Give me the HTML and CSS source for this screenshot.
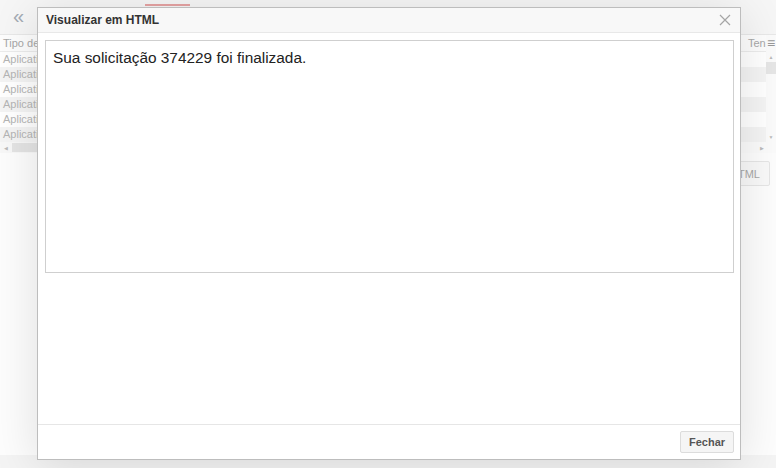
FILE: index.html
```html
<html lang="pt-BR">
<head>
    <meta charset="UTF-8">
    <title> Visualizar em HTML </title>
    <link rel="stylesheet" href="styles.css">
</head>
<body>
    <div class="page">
        <div class="toolbar">
            <span class="voltar">&laquo;</span>
            <span class="aba"></span>
        </div>
        <div class="grid">
            <div class="col_left">
                <div class="cab">Tipo de</div>
                <div class="linha">Aplicativo</div>
                <div class="linha par">Aplicativo</div>
                <div class="linha">Aplicativo</div>
                <div class="linha par">Aplicativo</div>
                <div class="linha">Aplicativo</div>
                <div class="linha par">Aplicativo</div>
                <div class="hscroll"><span class="seta">&#9664;</span><span class="thumb"></span></div>
            </div>
            <div class="col_right">
                <div class="cab">Ten<span class="menu">&#8801;</span></div>
                <div class="rows_scroll">
                    <div class="rows">
                        <div class="linha"></div>
                        <div class="linha par"></div>
                        <div class="linha"></div>
                        <div class="linha par"></div>
                        <div class="linha"></div>
                        <div class="linha par"></div>
                    </div>
                    <div class="vscroll">
                        <span class="seta">&#9650;</span>
                        <span class="vthumb"></span>
                        <span class="seta baixo">&#9660;</span>
                    </div>
                </div>
                <div class="hscroll dir"><span class="seta">&#9654;</span></div>
            </div>
        </div>
        <div class="acoes">
            <button class="btn_html">HTML</button>
        </div>
    </div>

    <div class="modal">
        <div class="modal_head">
            <strong>Visualizar em HTML</strong>
            <svg class="fechar_x" width="12" height="12" viewBox="0 0 12 12">
                <path d="M1 1 L11 11 M11 1 L1 11" stroke="#a5a5a5" stroke-width="1.2" fill="none"/>
            </svg>
        </div>
        <div class="modal_body">
            <div class="conteudo">Sua solicitação 374229 foi finalizada.</div>
        </div>
        <div class="modal_foot">
            <button class="btn_fechar">Fechar</button>
        </div>
    </div>
</body>
</html>
```

FILE: styles.css
```css
body {
    margin: 0;
    width: 776px;
    height: 468px;
    overflow: hidden;
    position: relative;
    font-family: "Liberation Sans", Arial, sans-serif;
    background: #f4f4f4;
}
.page {
    height: 455px;
    background: #fdfdfd;
}
.toolbar {
    height: 35px;
    background: #f6f6f6;
    border-bottom: 1px solid #e8e8e8;
    position: relative;
    box-sizing: border-box;
}
.voltar {
    position: absolute;
    left: 13px;
    top: 5px;
    font-size: 20px;
    color: #a3abb4;
}
.aba {
    position: absolute;
    left: 145px;
    top: 4px;
    width: 45px;
    height: 2px;
    background: #e5a3a3;
}
.grid {
    display: flex;
    justify-content: space-between;
    height: 116px;
    border-bottom: 1px solid #ececec;
    font-size: 11px;
    color: #b5b5b5;
}
.col_left {
    width: 80px;
    white-space: nowrap;
}
.col_right {
    width: 36px;
    white-space: nowrap;
}
.cab {
    height: 17px;
    line-height: 17px;
    padding-left: 3px;
    color: #a8a8a8;
    border-bottom: 1px solid #ececec;
    box-sizing: border-box;
    position: relative;
}
.col_right .cab {
    padding-left: 8px;
}
.menu {
    position: absolute;
    right: 0;
    top: 0;
    font-size: 14px;
    color: #999;
    background: #fbfbfb;
    width: 10px;
    text-align: center;
}
.linha {
    height: 15px;
    line-height: 15px;
    padding-left: 3px;
    background: #fff;
}
.linha.par {
    background: #f4f4f4;
}
.rows_scroll {
    display: flex;
}
.rows {
    flex: 1;
}
.vscroll {
    width: 10px;
    height: 90px;
    background: #fbfbfb;
    display: flex;
    flex-direction: column;
    align-items: center;
    font-size: 5px;
    color: #bbb;
}
.vscroll .seta {
    height: 10px;
    line-height: 10px;
}
.vthumb {
    width: 10px;
    height: 12px;
    background: #e6e6e6;
}
.vscroll .baixo {
    margin-top: auto;
}
.hscroll {
    height: 11px;
    background: #f8f8f8;
    display: flex;
    align-items: center;
    font-size: 5px;
    color: #bbb;
}
.hscroll .seta {
    width: 12px;
    text-align: center;
}
.thumb {
    flex: 1;
    height: 9px;
    background: #e4e4e4;
}
.hscroll.dir {
    justify-content: flex-end;
    padding-right: 8px;
    background: #fbfbfb;
}
.acoes {
    display: flex;
    justify-content: flex-end;
    padding: 9px 6px;
}
.btn_html {
    font-family: "Liberation Sans", Arial, sans-serif;
    font-size: 11px;
    color: #a8a8a8;
    background: #f9f9f9;
    border: 1px solid #e6e6e6;
    border-radius: 2px;
    height: 25px;
    padding: 0 9px;
}
.modal {
    position: absolute;
    left: 37px;
    top: 7px;
    width: 704px;
    height: 453px;
    box-sizing: border-box;
    border: 1px solid #bdbdbd;
    background: #fff;
    display: flex;
    flex-direction: column;
    box-shadow: 0 6px 45px rgba(0, 0, 0, 0.12);
}
.modal_head {
    height: 25px;
    flex-shrink: 0;
    box-sizing: border-box;
    padding: 0 9px 0 8px;
    background: #f8f8f8;
    border-bottom: 1px solid #e8e8e8;
    display: flex;
    align-items: center;
    justify-content: space-between;
    font-size: 12px;
    color: #333;
}
.modal_body {
    flex: 1;
    padding: 7px 6px 0 7px;
}
.conteudo {
    height: 233px;
    box-sizing: border-box;
    border: 1px solid #cfcfcf;
    padding: 8px 7px;
    font-size: 15.4px;
    color: #222;
}
.modal_foot {
    height: 35px;
    flex-shrink: 0;
    box-sizing: border-box;
    border-top: 1px solid #e6e6e6;
    display: flex;
    justify-content: flex-end;
    align-items: center;
    padding-right: 6px;
}
.btn_fechar {
    font-family: "Liberation Sans", Arial, sans-serif;
    font-size: 11px;
    font-weight: bold;
    color: #555;
    background: #f5f5f5;
    border: 1px solid #dcdcdc;
    border-radius: 2px;
    width: 54px;
    height: 22px;
    padding: 0;
}
```
